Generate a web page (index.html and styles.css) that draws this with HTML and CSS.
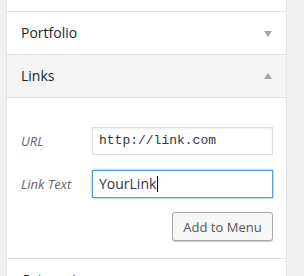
FILE: index.html
```html
<!DOCTYPE html>
<html lang="en">
<head>
    <meta charset="UTF-8">
    <title>Menu items</title>
    <link rel="stylesheet" href="styles.css">
</head>
<body>
    <div class="panel">
        <div class="section-end"></div>

        <div class="box-head">
            <span class="box-title">Portfolio</span>
            <span class="arrow arrow-down"></span>
        </div>

        <div class="box-head open">
            <span class="box-title">Links</span>
            <span class="arrow arrow-up"></span>
        </div>

        <!-- Custom link form -->
        <div class="box-body">
            <div class="field-row">
                <span class="field-label">URL</span>
                <div class="field mono">http://link.com</div>
            </div>
            <div class="field-row">
                <span class="field-label">Link Text</span>
                <div class="field focused">YourLink<span class="caret"></span></div>
            </div>
            <div class="actions">
                <button type="button" class="btn">Add to Menu</button>
            </div>
        </div>

        <div class="box-head">
            <span class="box-title">Categories</span>
            <span class="arrow arrow-down"></span>
        </div>
    </div>
</body>
</html>
```

FILE: styles.css
```css
body {
    margin: 0;
    background-color: #f1f1f1;
    font-family: 'Open Sans', sans-serif;
    color: #23282d;
    height: 276px;
    overflow: hidden;
}
.panel {
    margin-left: 6px;
    width: 279px;
    background: #fff;
    border-left: 1px solid #e5e5e5;
    border-right: 1px solid #e5e5e5;
}
.section-end {
    height: 11px;
    border-bottom: 1px solid #e1e1e1;
}
.box-head {
    height: 42px;
    border-bottom: 1px solid #e1e1e1;
    display: flex;
    align-items: center;
    justify-content: space-between;
    padding: 0 14px 0 14px;
}
.box-head.open {
    background-color: #f4f4f4;
}
.box-title {
    font-size: 14px;
    line-height: 20px;
}
.arrow {
    width: 0;
    height: 0;
    border-left: 4.5px solid transparent;
    border-right: 4.5px solid transparent;
}
.arrow-down {
    border-top: 6px solid #a0a5aa;
    margin-top: 1px;
}
.arrow-up {
    border-bottom: 6px solid #a0a5aa;
    margin-top: -1px;
}
.box-body {
    padding: 29px 13px 17px 14px;
    border-bottom: 1px solid #e1e1e1;
}
.field-row {
    display: grid;
    grid-template-columns: 71px 1fr;
    align-items: center;
    margin-bottom: 15px;
}
.field-label {
    font-size: 13px;
    font-style: italic;
    color: #666;
}
.field {
    height: 26px;
    border: 1px solid #ddd;
    box-shadow: inset 0 1px 2px rgba(0, 0, 0, 0.07);
    padding: 0 6px;
    font-size: 14px;
    line-height: 26px;
    color: #32373c;
    display: flex;
    align-items: center;
}
.mono {
    font-family: 'Liberation Mono', monospace;
    font-size: 13px;
}
.field.focused {
    border-color: #5b9dd9;
    box-shadow: 0 0 2px rgba(30, 140, 190, 0.8);
}
.caret {
    display: inline-block;
    width: 1px;
    height: 16px;
    background: #000;
    margin-left: 1px;
}
.actions {
    display: flex;
    justify-content: flex-end;
    margin-top: -1px;
}
.btn {
    font-family: 'Open Sans', sans-serif;
    font-size: 13px;
    color: #555;
    background: #f7f7f7;
    border: 1px solid #aaa;
    border-radius: 3px;
    height: 29px;
    width: 101px;
    padding: 0;
    box-shadow: 0 1px 0 #ccc;
    cursor: pointer;
}
```
